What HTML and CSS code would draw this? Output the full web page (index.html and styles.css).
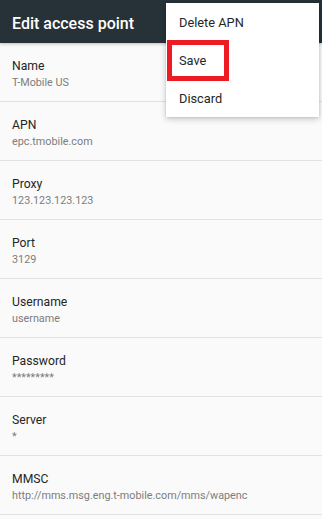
FILE: index.html
```html
<!DOCTYPE html>
<html>
<head>
<meta charset="utf-8">
<link rel="stylesheet" href="styles.css">
</head>
<body>
<div class="screen">
  <header class="appbar">Edit access point</header>
  <ul class="list">
    <li class="row"><div class="label">Name</div><div class="value">T-Mobile US</div></li>
    <li class="row"><div class="label">APN</div><div class="value">epc.tmobile.com</div></li>
    <li class="row"><div class="label">Proxy</div><div class="value">123.123.123.123</div></li>
    <li class="row"><div class="label">Port</div><div class="value">3129</div></li>
    <li class="row"><div class="label">Username</div><div class="value">username</div></li>
    <li class="row"><div class="label">Password</div><div class="value">*********</div></li>
    <li class="row"><div class="label">Server</div><div class="value">*</div></li>
    <li class="row"><div class="label">MMSC</div><div class="value">http://mms.msg.eng.t-mobile.com/mms/wapenc</div></li>
  </ul>
  <div class="menu">
    <div class="menu-item">Delete APN</div>
    <div class="menu-item">Save</div>
    <div class="menu-item">Discard</div>
  </div>
  <div class="highlight"></div>
</div>
</body>
</html>
```
FILE: styles.css
```css
* { box-sizing: border-box; }
html, body { margin: 0; padding: 0; }
body {
  font-family: Roboto, "Noto Sans", "Liberation Sans", sans-serif;
  background: #fafafa;
}
.screen {
  position: relative;
  width: 322px;
  height: 519px;
  overflow: hidden;
  background: #fafafa;
}
.appbar {
  height: 43px;
  padding: 4px 0 0 12px;
  line-height: 39px;
  font-size: 16px;
  font-weight: 500;
  color: #ffffff;
  background: #263238;
  box-shadow: 0 1px 3px rgba(0,0,0,0.25);
  position: relative;
  z-index: 1;
}
.list {
  list-style: none;
  margin: 0;
  padding: 0;
}
.row {
  height: 59px;
  padding: 16px 12px 0 12px;
  border-bottom: 1px solid #e2e2e2;
}
.label {
  font-size: 12.2px;
  line-height: 15px;
  color: #262626;
}
.value {
  margin-top: 1px;
  font-size: 10.8px;
  line-height: 16px;
  color: #7d7d7d;
  white-space: nowrap;
}
.menu {
  position: absolute;
  top: 3px;
  right: 3px;
  width: 153px;
  background: #ffffff;
  box-shadow: 0 2px 6px rgba(0,0,0,0.22), 0 0 2px rgba(0,0,0,0.12);
  z-index: 2;
}
.menu-item {
  height: 38px;
  padding-left: 13px;
  display: flex;
  align-items: center;
  font-size: 12.8px;
  color: #262626;
}
.highlight {
  position: absolute;
  left: 167px;
  top: 40px;
  width: 62px;
  height: 41px;
  border: 5px solid #ed1c24;
  z-index: 3;
}
```
